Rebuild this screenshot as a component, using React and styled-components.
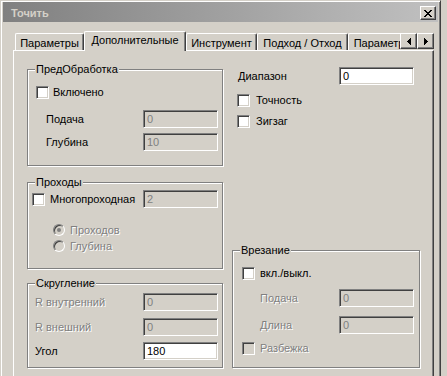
import React from 'react';
import styled, { createGlobalStyle, css } from 'styled-components';

const Global = createGlobalStyle`
  html, body { margin: 0; padding: 0; background: #d4d0c8; overflow: hidden; }
  body {
    font-family: "Liberation Sans", Arial, sans-serif;
    font-size: 11px;
    color: #000;
  }
  #root { width: 447px; height: 376px; overflow: hidden; }
`;

const Window = styled.div`
  box-sizing: border-box;
  width: 441px;
  height: 400px;
  background: #d4d0c8;
  border: 1px solid;
  border-color: #d4d0c8 #404040 #404040 #d4d0c8;
  box-shadow: inset 1px 1px #fff, inset -1px -1px #808080;
  padding: 1px 2px 2px 2px;
  display: flex;
  flex-direction: column;
`;

const TitleBar = styled.div`
  height: 20px;
  flex: none;
  box-sizing: border-box;
  background: linear-gradient(to right, #808080, #c0c0c0);
  display: flex;
  align-items: center;
  justify-content: space-between;
  padding: 2px 2px 0 8px;
`;

const TitleText = styled.span`
  color: #d4d0c8;
  font-weight: bold;
  font-size: 11px;
`;

const FrameButton = styled.div`
  box-sizing: border-box;
  width: ${p => p.$w}px;
  height: ${p => p.$h}px;
  background: #d4d0c8;
  border: 1px solid;
  border-color: #fff #404040 #404040 #fff;
  box-shadow: inset -1px -1px #808080;
  display: flex;
  align-items: center;
  justify-content: center;
  flex: none;
`;

const TabControl = styled.div`
  margin: 9px 4px 0 10px;
  flex: 1;
  display: flex;
  flex-direction: column;
`;

const TabStrip = styled.div`
  display: flex;
  height: 20px;
  margin-bottom: -1px;
  position: relative;
  z-index: 1;
`;

const TabList = styled.div`
  flex: 1;
  min-width: 0;
  display: flex;
  align-items: flex-end;
  padding-left: 2px;
  overflow: hidden;
`;

const Tab = styled.div`
  box-sizing: border-box;
  flex: none;
  width: ${p => p.$w}px;
  height: 17px;
  margin-bottom: 1px;
  background: #d4d0c8;
  border-top: 1px solid #fff;
  border-left: 1px solid #fff;
  border-right: 1px solid #404040;
  box-shadow: inset -1px 0 #808080;
  border-radius: 2px 2px 0 0;
  padding-top: 3px;
  line-height: 13px;
  text-align: center;
  white-space: nowrap;
  ${p => p.$active && css`
    height: 20px;
    margin-bottom: 0;
    padding-top: 2px;
  `}
`;

const Arrows = styled.div`
  display: flex;
  align-self: flex-start;
  margin-top: 2px;
`;

const Panel = styled.div`
  flex: 1;
  background: #d4d0c8;
  border-top: 1px solid #fff;
  border-left: 1px solid #fff;
  border-right: 1px solid #404040;
  box-shadow: inset -1px 0 #808080;
  display: grid;
  grid-template-columns: 196px 188px;
  column-gap: 9px;
  padding: 16px 0 0 13px;
  align-content: start;
`;

const Column = styled.div`
  display: flex;
  flex-direction: column;
`;

const Group = styled.div`
  position: relative;
  box-sizing: border-box;
  height: ${p => p.$h}px;
  margin-top: ${p => p.$mt || 0}px;
  border: 1px solid #808080;
  box-shadow: inset 1px 1px #fff, 1px 1px #fff;
  display: flex;
  flex-direction: column;
  ${p => p.$bottom && css`margin-top: auto;`}
`;

const Legend = styled.span`
  position: absolute;
  top: -7px;
  left: 7px;
  padding: 0 1px;
  background: #d4d0c8;
  line-height: 13px;
  white-space: nowrap;
`;

const Row = styled.div`
  display: flex;
  align-items: center;
  flex: none;
  height: ${p => p.$h ?? 18}px;
  margin-top: ${p => p.$mt || 0}px;
  padding-left: ${p => p.$pl || 0}px;
  gap: ${p => p.$gap || 0}px;
`;

const Cell = styled.div`
  flex: none;
  width: ${p => p.$w}px;
  display: flex;
  align-items: center;
  gap: ${p => p.$gap || 0}px;
`;

const Label = styled.span`
  white-space: nowrap;
  line-height: 13px;
  color: ${p => (p.$disabled ? '#808080' : '#000')};
  text-shadow: ${p => (p.$disabled ? '1px 1px 0 #fff' : 'none')};
`;

const Field = styled.input`
  box-sizing: border-box;
  width: 75px;
  height: 18px;
  margin: 0;
  padding: 0 0 0 3px;
  font-family: "Liberation Sans", Arial, sans-serif;
  font-size: 11px;
  color: ${p => (p.disabled ? '#808080' : '#000')};
  -webkit-text-fill-color: ${p => (p.disabled ? '#808080' : '#000')};
  background: ${p => (p.disabled ? '#d4d0c8' : '#fff')};
  border: 1px solid;
  border-color: #808080 #fff #fff #808080;
  box-shadow: inset 1px 1px #404040, inset -1px -1px #d4d0c8;
  outline: none;
  opacity: 1;
  border-radius: 0;
`;

const Box = styled.span`
  box-sizing: border-box;
  flex: none;
  width: 13px;
  height: 13px;
  background: ${p => (p.$disabled ? '#d4d0c8' : '#fff')};
  border: 1px solid;
  border-color: #808080 #fff #fff #808080;
  box-shadow: inset 1px 1px #404040, inset -1px -1px #d4d0c8;
`;

const RadioCircle = styled.span`
  position: relative;
  box-sizing: border-box;
  flex: none;
  width: 12px;
  height: 12px;
  border-radius: 50%;
  background: #d4d0c8;
  border: 1px solid;
  border-color: #808080 #fff #fff #808080;
  box-shadow: inset 1px 1px #404040, inset -1px -1px #d4d0c8;
  ${p => p.$checked && css`
    &::after {
      content: '';
      position: absolute;
      left: 3px;
      top: 3px;
      width: 4px;
      height: 4px;
      border-radius: 50%;
      background: #808080;
    }
  `}
`;

const CloseIcon = () => (
  <svg width="8" height="7" viewBox="0 0 8 7" shapeRendering="crispEdges">
    <path d="M0 0h2v1h-2zM6 0h2v1h-2zM1 1h2v1h-2zM5 1h2v1h-2zM2 2h4v1h-4zM3 3h2v1h-2zM2 4h4v1h-4zM1 5h2v1h-2zM5 5h2v1h-2zM0 6h2v1h-2zM6 6h2v1h-2z" fill="#000" />
  </svg>
);

const ArrowIcon = ({ dir }) => (
  <svg width="4" height="7" viewBox="0 0 4 7" shapeRendering="crispEdges">
    {dir === 'left' ? (
      <path d="M3 0h1v7h-1zM2 1h1v5h-1zM1 2h1v3h-1zM0 3h1v1h-1z" fill="#000" />
    ) : (
      <path d="M0 0h1v7h-1zM1 1h1v5h-1zM2 2h1v3h-1zM3 3h1v1h-1z" fill="#000" />
    )}
  </svg>
);

const Check = ({ label, disabled }) => (
  <>
    <Box $disabled={disabled} />
    <Label $disabled={disabled}>{label}</Label>
  </>
);

const tabs = [
  { t: 'Параметры', w: 69 },
  { t: 'Дополнительные', w: 102, active: true },
  { t: 'Инструмент', w: 71 },
  { t: 'Подход / Отход', w: 91 },
  { t: 'Параметры', w: 70 },
];

export default function App() {
  return (
    <>
      <Global />
      <Window>
        <TitleBar>
          <TitleText>Точить</TitleText>
          <FrameButton $w={16} $h={14}>
            <CloseIcon />
          </FrameButton>
        </TitleBar>
        <TabControl>
          <TabStrip>
            <TabList>
              {tabs.map((tb, i) => (
                <Tab key={i} $w={tb.w} $active={tb.active}>{tb.t}</Tab>
              ))}
            </TabList>
            <Arrows>
              <FrameButton $w={17} $h={16}><ArrowIcon dir="left" /></FrameButton>
              <FrameButton $w={17} $h={16}><ArrowIcon dir="right" /></FrameButton>
            </Arrows>
          </TabStrip>
          <Panel>
            <Column>
              <Group $h={97} $mt={2}>
                <Legend>ПредОбработка</Legend>
                <Row $h={13} $mt={16} $pl={8} $gap={4}>
                  <Check label="Включено" />
                </Row>
                <Row $mt={11} $pl={18}>
                  <Cell $w={97}><Label>Подача</Label></Cell>
                  <Field disabled defaultValue="0" />
                </Row>
                <Row $mt={5} $pl={18}>
                  <Cell $w={97}><Label>Глубина</Label></Cell>
                  <Field disabled defaultValue="10" />
                </Row>
              </Group>
              <Group $h={87} $mt={16}>
                <Legend>Проходы</Legend>
                <Row $mt={7} $pl={4}>
                  <Cell $w={111} $gap={5}>
                    <Check label="Многопроходная" />
                  </Cell>
                  <Field disabled defaultValue="2" />
                </Row>
                <Row $h={12} $mt={16} $pl={25} $gap={5}>
                  <RadioCircle $checked />
                  <Label $disabled>Проходов</Label>
                </Row>
                <Row $h={12} $mt={4} $pl={25} $gap={5}>
                  <RadioCircle />
                  <Label $disabled>Глубина</Label>
                </Row>
              </Group>
              <Group $h={85} $mt={14}>
                <Legend>Скругление</Legend>
                <Row $mt={9} $pl={7}>
                  <Cell $w={108}><Label $disabled>R внутренний</Label></Cell>
                  <Field disabled defaultValue="0" />
                </Row>
                <Row $mt={7} $pl={7}>
                  <Cell $w={108}><Label $disabled>R внешний</Label></Cell>
                  <Field disabled defaultValue="0" />
                </Row>
                <Row $mt={6} $pl={7}>
                  <Cell $w={108}><Label>Угол</Label></Cell>
                  <Field defaultValue="180" />
                </Row>
              </Group>
            </Column>
            <Column>
              <Row $pl={6}>
                <Cell $w={101}><Label>Диапазон</Label></Cell>
                <Field defaultValue="0" />
              </Row>
              <Row $h={13} $mt={9} $pl={5} $gap={6}>
                <Check label="Точность" />
              </Row>
              <Row $h={13} $mt={8} $pl={5} $gap={6}>
                <Check label="Зигзаг" />
              </Row>
              <Group $h={118} $bottom>
                <Legend>Врезание</Legend>
                <Row $h={13} $mt={16} $pl={9} $gap={5}>
                  <Check label="вкл./выкл." />
                </Row>
                <Row $mt={9} $pl={27}>
                  <Cell $w={79}><Label $disabled>Подача</Label></Cell>
                  <Field disabled defaultValue="0" />
                </Row>
                <Row $mt={9} $pl={27}>
                  <Cell $w={79}><Label $disabled>Длина</Label></Cell>
                  <Field disabled defaultValue="0" />
                </Row>
                <Row $h={13} $mt={8} $pl={9} $gap={5}>
                  <Check label="Разбежка" disabled />
                </Row>
              </Group>
            </Column>
          </Panel>
        </TabControl>
      </Window>
    </>
  );
}
